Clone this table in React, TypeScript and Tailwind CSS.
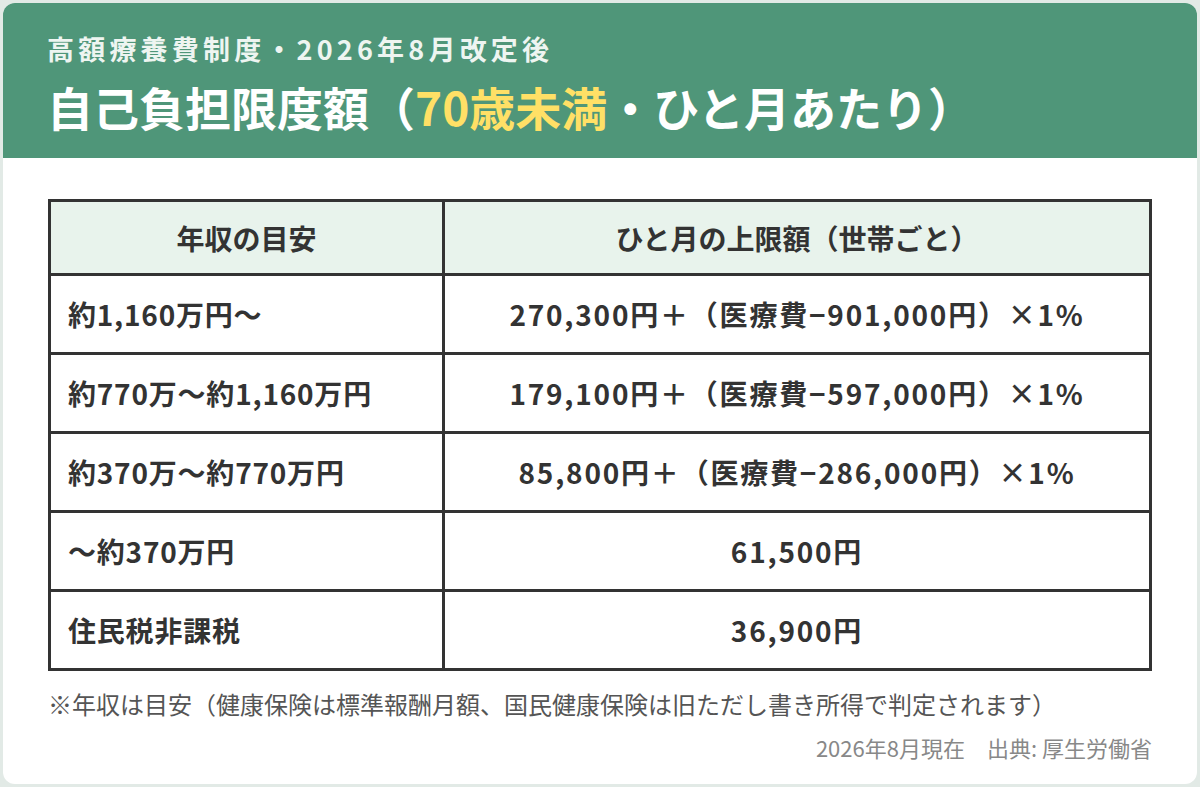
const FONT = { fontFamily: '"Noto Sans CJK JP", "Noto Sans", sans-serif' };

const ROWS = [
  { income: '約1,160万円〜', limit: '270,300円＋（医療費−901,000円）×1%' },
  { income: '約770万〜約1,160万円', limit: '179,100円＋（医療費−597,000円）×1%' },
  { income: '約370万〜約770万円', limit: '85,800円＋（医療費−286,000円）×1%' },
  { income: '〜約370万円', limit: '61,500円' },
  { income: '住民税非課税', limit: '36,900円' },
];

export default function App() {
  return (
    <div className="min-h-screen bg-[#e2eae6] p-[3px]" style={FONT}>
      <div className="h-[781px] overflow-hidden rounded-xl bg-white">
        {/* Header */}
        <div className="flex h-[155px] flex-col bg-[#4f9679] pl-[44px] pt-[30px]">
          <div className="text-[27px] font-bold leading-[32px] tracking-[4.2px] text-[#eef5f1]">
            高額療養費制度・2026年8月改定後
          </div>
          <div className="mt-[15px] text-[46px] font-bold leading-[52px] text-white">
            自己負担限度額（<span className="text-[#ffe066]">70歳未満</span>・ひと月あたり）
          </div>
        </div>

        {/* Body */}
        <div className="px-[45px] pt-[41px]">
          <table className="w-full border-collapse text-[28px] font-bold text-[#333]">
            <thead>
              <tr className="h-[74px] bg-[#e8f3ec]">
                <th className="w-[394px] border-[3px] border-[#333] text-center">年収の目安</th>
                <th className="border-[3px] border-[#333] text-center">ひと月の上限額（世帯ごと）</th>
              </tr>
            </thead>
            <tbody>
              {ROWS.map((r) => (
                <tr key={r.income} className="h-[79px]">
                  <td className="border-[3px] border-[#333] pl-[17px] tracking-[0.8px]">{r.income}</td>
                  <td className="border-[3px] border-[#333] text-center tracking-[1.8px]">{r.limit}</td>
                </tr>
              ))}
            </tbody>
          </table>

          <p className="mt-[17px] text-[24px] leading-[32px] text-[#555]">
            ※年収は目安（健康保険は標準報酬月額、国民健康保険は旧ただし書き所得で判定されます）
          </p>
          <p className="mt-[13px] text-right text-[22px] leading-[28px] text-[#888]">
            2026年8月現在　出典: 厚生労働省
          </p>
        </div>
      </div>
    </div>
  );
}
